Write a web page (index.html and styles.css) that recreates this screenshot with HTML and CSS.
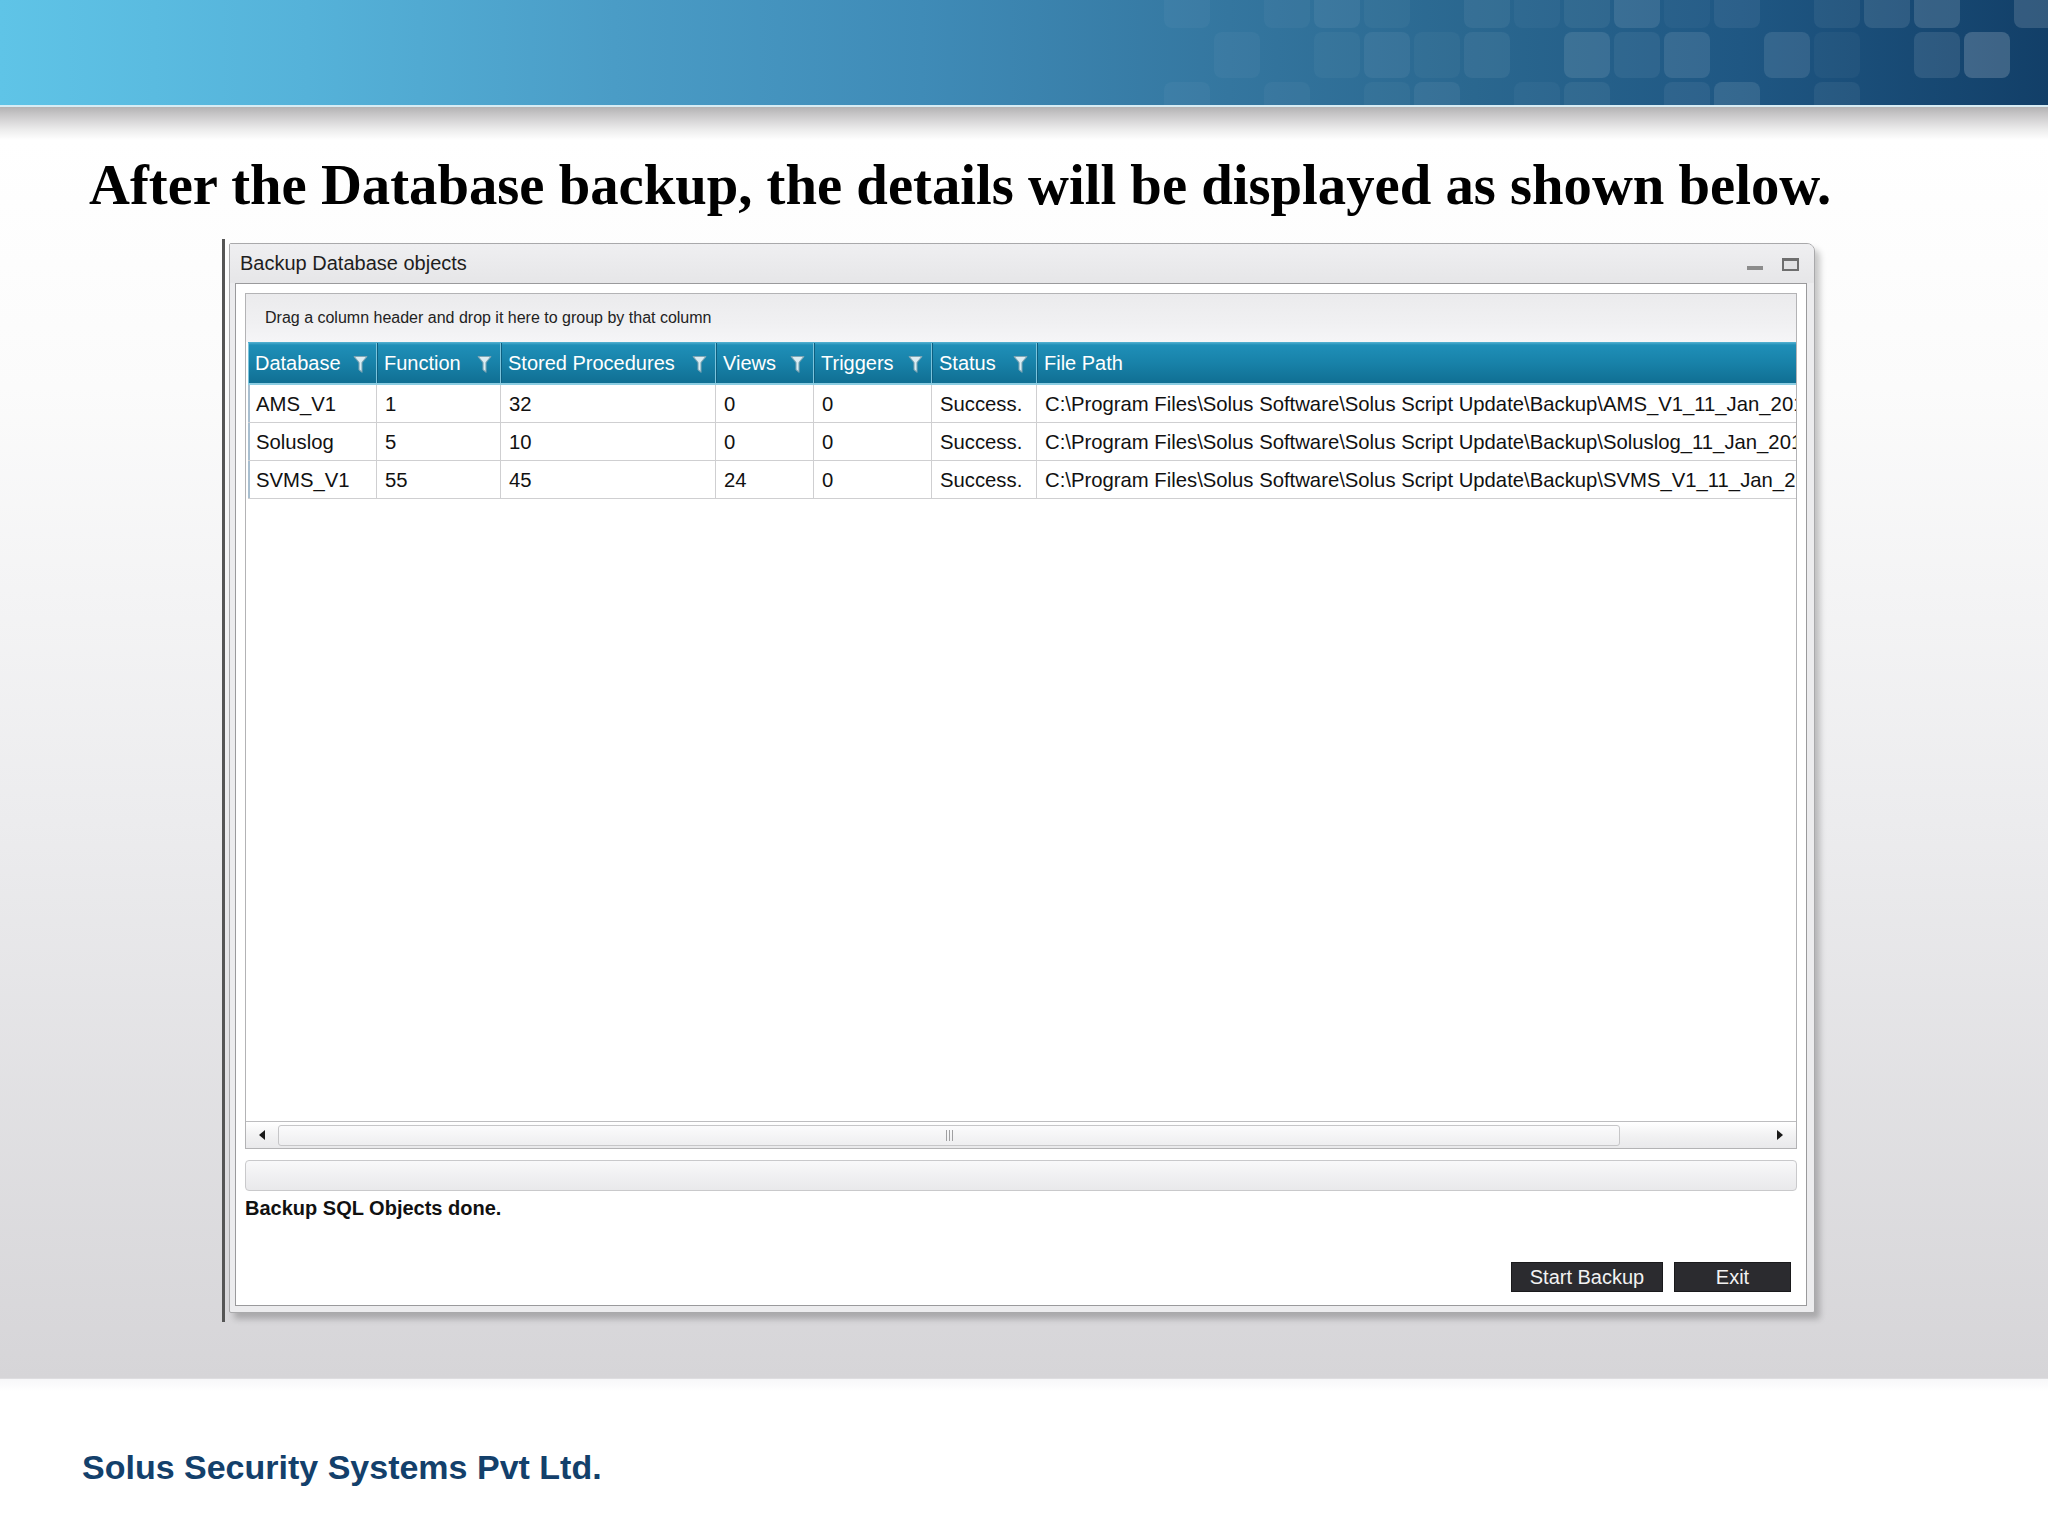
FILE: index.html
```html
<!DOCTYPE html>
<html lang="en">
<head>
<meta charset="utf-8">
<title>Backup Database objects</title>
<link rel="stylesheet" href="styles.css">
</head>
<body>
<div class="slide">
  <header class="banner">
    <div class="tiles">
      <i class="a1"></i><i class="a0"></i><i class="a1"></i><i class="a2"></i><i class="a1"></i><i class="a0"></i><i class="a2"></i><i class="a1"></i><i class="a2"></i><i class="a3"></i><i class="a1"></i><i class="a2"></i><i class="a0"></i><i class="a2"></i><i class="a3"></i><i class="a4"></i><i class="a0"></i><i class="a4"></i>
      <i class="a0"></i><i class="a1"></i><i class="a0"></i><i class="a1"></i><i class="a2"></i><i class="a1"></i><i class="a2"></i><i class="a0"></i><i class="a3"></i><i class="a2"></i><i class="a3"></i><i class="a0"></i><i class="a3"></i><i class="a1"></i><i class="a0"></i><i class="a3"></i><i class="a5"></i><i class="a0"></i>
      <i class="a1"></i><i class="a0"></i><i class="a1"></i><i class="a0"></i><i class="a1"></i><i class="a2"></i><i class="a0"></i><i class="a1"></i><i class="a2"></i><i class="a0"></i><i class="a2"></i><i class="a3"></i><i class="a0"></i><i class="a2"></i><i class="a0"></i><i class="a0"></i><i class="a0"></i><i class="a0"></i>
    </div>
  </header>
  <div class="banner-edge"></div>

  <main class="stage">
    <h1 class="headline">After the Database backup, the details will be displayed as shown below.</h1>

    <div class="shot">
      <div class="handle"></div>
      <section class="window">
        <div class="titlebar">
          <span class="wtitle">Backup Database objects</span>
          <span class="wbtns"><i class="wmin"></i><i class="wmax"></i></span>
        </div>
        <div class="panel">
          <div class="grid">
            <div class="grouping">Drag a column header and drop it here to group by that column</div>
            <div class="cols thead">
              <div class="th"><span>Database</span><svg class="funnel" viewBox="0 0 14 18"><path d="M1 1.5h12l-4.6 5.6v9.2l-2.8-2.4V7.1z"/></svg></div>
              <div class="th"><span>Function</span><svg class="funnel" viewBox="0 0 14 18"><path d="M1 1.5h12l-4.6 5.6v9.2l-2.8-2.4V7.1z"/></svg></div>
              <div class="th"><span>Stored Procedures</span><svg class="funnel" viewBox="0 0 14 18"><path d="M1 1.5h12l-4.6 5.6v9.2l-2.8-2.4V7.1z"/></svg></div>
              <div class="th"><span>Views</span><svg class="funnel" viewBox="0 0 14 18"><path d="M1 1.5h12l-4.6 5.6v9.2l-2.8-2.4V7.1z"/></svg></div>
              <div class="th"><span>Triggers</span><svg class="funnel" viewBox="0 0 14 18"><path d="M1 1.5h12l-4.6 5.6v9.2l-2.8-2.4V7.1z"/></svg></div>
              <div class="th"><span>Status</span><svg class="funnel" viewBox="0 0 14 18"><path d="M1 1.5h12l-4.6 5.6v9.2l-2.8-2.4V7.1z"/></svg></div>
              <div class="th last"><span>File Path</span></div>
            </div>
            <div class="cols trow">
              <div class="td first">AMS_V1</div><div class="td">1</div><div class="td">32</div><div class="td">0</div><div class="td">0</div><div class="td">Success.</div><div class="td last">C:\Program Files\Solus Software\Solus Script Update\Backup\AMS_V1_11_Jan_2013</div>
            </div>
            <div class="cols trow">
              <div class="td first">Soluslog</div><div class="td">5</div><div class="td">10</div><div class="td">0</div><div class="td">0</div><div class="td">Success.</div><div class="td last">C:\Program Files\Solus Software\Solus Script Update\Backup\Soluslog_11_Jan_2013</div>
            </div>
            <div class="cols trow">
              <div class="td first">SVMS_V1</div><div class="td">55</div><div class="td">45</div><div class="td">24</div><div class="td">0</div><div class="td">Success.</div><div class="td last">C:\Program Files\Solus Software\Solus Script Update\Backup\SVMS_V1_11_Jan_2013</div>
            </div>
            <div class="empty"></div>
            <div class="hscroll">
              <div class="sbtn"><i class="arrow-left"></i></div>
              <div class="thumb"><i class="grip"></i></div>
              <div class="track"></div>
              <div class="sbtn"><i class="arrow-right"></i></div>
            </div>
          </div>
          <div class="progress"></div>
          <div class="status">Backup SQL Objects done.</div>
          <div class="actions">
            <button class="btn btn-start">Start Backup</button>
            <button class="btn btn-exit">Exit</button>
          </div>
        </div>
      </section>
    </div>
  </main>

  <footer class="footer">Solus Security Systems Pvt Ltd.</footer>
</div>
</body>
</html>
```

FILE: styles.css
```css
* { box-sizing: border-box; }

html, body {
  margin: 0;
  padding: 0;
  background: #ffffff;
}

.slide {
  width: 2048px;
  height: 1536px;
  display: flex;
  flex-direction: column;
  overflow: hidden;
  font-family: "Liberation Sans", Arial, sans-serif;
}

/* ---------- banner ---------- */
.banner {
  height: 105px;
  flex: none;
  overflow: hidden;
  display: flex;
  justify-content: flex-end;
  background: linear-gradient(90deg, #5fc4e7 0%, #55b2d9 15%, #4a9cc6 30%, #3f8bb7 45%, #34769f 60%, #2a678f 72%, #1f5783 85%, #123f68 100%);
}

.tiles {
  display: grid;
  grid-template-columns: repeat(18, 46px);
  grid-auto-rows: 46px;
  gap: 4px;
  margin-top: -18px;
  margin-right: -12px;
}

.tiles i {
  display: block;
  border-radius: 8px;
  background: rgba(255, 255, 255, 0.04);
}
.tiles i.a0 { background: rgba(255, 255, 255, 0.0); }
.tiles i.a1 { background: rgba(255, 255, 255, 0.035); }
.tiles i.a2 { background: rgba(255, 255, 255, 0.06); }
.tiles i.a3 { background: rgba(255, 255, 255, 0.10); }
.tiles i.a4 { background: rgba(255, 255, 255, 0.14); }
.tiles i.a5 { background: rgba(255, 255, 255, 0.18); }

.banner-edge {
  height: 35px;
  flex: none;
  background:
    linear-gradient(#d7ecf4, #d7ecf4) top / 100% 2px no-repeat,
    linear-gradient(180deg, #b3b2b3 2px, #c9c8c9 10px, #ebebeb 24px, #ffffff 35px);
}

/* ---------- stage ---------- */
.stage {
  height: 1238px;
  flex: none;
  background: linear-gradient(180deg, #ffffff 0%, #fbfbfb 20%, #ececee 55%, #d6d5d8 100%);
  display: flex;
  flex-direction: column;
}

.headline {
  margin: 14px 0 0 89px;
  font-family: "Liberation Serif", "Times New Roman", serif;
  font-weight: bold;
  font-size: 56.7px;
  line-height: 62px;
  color: #000;
  white-space: nowrap;
}

.shot {
  margin: 23px 0 0 222px;
  height: 1083px;
  display: flex;
  align-items: flex-start;
}

.handle {
  width: 3px;
  height: 1083px;
  background: #555555;
  flex: none;
}

/* ---------- window ---------- */
.window {
  margin: 4px 0 0 4px;
  width: 1586px;
  height: 1070px;
  background: #ececee;
  border: 1px solid #a9a9ab;
  border-radius: 2px 8px 2px 2px;
  box-shadow: 5px 6px 6px rgba(0, 0, 0, 0.22);
  display: flex;
  flex-direction: column;
}

.titlebar {
  height: 39px;
  flex: none;
  display: flex;
  align-items: center;
  justify-content: space-between;
  padding: 0 15px 0 10px;
  background: linear-gradient(180deg, #efeff1, #e6e6e8);
  border-radius: 0 7px 0 0;
}

.wtitle {
  font-size: 20px;
  color: #1e1e1e;
}

.wbtns {
  display: flex;
  align-items: flex-end;
  gap: 19px;
  margin-top: 2px;
}

.wmin {
  display: block;
  width: 16px;
  height: 4px;
  background: #8c8c8c;
  margin-bottom: 1px;
}

.wmax {
  display: block;
  width: 17px;
  height: 13px;
  border: 2px solid #6e6e6e;
  border-top-width: 3px;
  background: #e2e2e4;
}

.panel {
  flex: 1;
  margin: 0 7px 6px 5px;
  background: #ffffff;
  border: 1px solid #9a9a9c;
  padding: 9px 9px 13px 9px;
  display: flex;
  flex-direction: column;
}

/* ---------- grid ---------- */
.grid {
  height: 856px;
  flex: none;
  border: 1px solid #b3b3b5;
  display: flex;
  flex-direction: column;
  overflow: hidden;
}

.grouping {
  height: 48px;
  flex: none;
  padding-left: 19px;
  display: flex;
  align-items: center;
  font-size: 16px;
  color: #222;
  background: linear-gradient(180deg, #ebebed 0%, #f0f0f2 60%, #f5f5f7 100%);
}

.cols {
  display: grid;
  grid-template-columns: 129px 124px 215px 98px 118px 105px 759px;
  margin-left: 2px;
  flex: none;
}

.thead {
  height: 43px;
  padding-top: 1px;
  background: linear-gradient(180deg, #56b3d3 0px, #1f8fb8 3px, #1882a9 50%, #106f93 100%);
  border-bottom: 2px solid #8ccde2;
}

.th {
  display: flex;
  align-items: center;
  justify-content: space-between;
  padding: 0 8px 0 6px;
  color: #ffffff;
  font-size: 20px;
  border-right: 1px solid #7cc4dc;
  border-left: 1px solid #0d5f80;
  white-space: nowrap;
  overflow: hidden;
}
.th:first-child { border-left: 1px solid #7cc4dc; }
.th.last { border-right: none; }

.funnel {
  width: 15px;
  height: 19px;
  flex: none;
  margin-top: 2px;
}
.funnel path {
  fill: #dcedf3;
  stroke: #7fa6b5;
  stroke-width: 1;
  stroke-linejoin: round;
}

.trow {
  height: 38px;
  border-bottom: 1px solid #cfcfd1;
}

.td {
  display: flex;
  align-items: center;
  padding-left: 8px;
  padding-top: 1px;
  font-size: 20.3px;
  color: #111;
  border-right: 1px solid #cfcfd1;
  white-space: nowrap;
  overflow: hidden;
}
.td.first {
  padding-left: 6px;
  border-left: 2px solid #a9bfd0;
}
.td.last { border-right: none; }

.empty {
  flex: 1;
  background: #ffffff;
}

.hscroll {
  height: 27px;
  flex: none;
  display: flex;
  align-items: center;
  border-top: 1px solid #bdbdbf;
  background: linear-gradient(180deg, #ffffff 0%, #f2f2f3 50%, #e9e9eb 100%);
}

.sbtn {
  width: 32px;
  height: 100%;
  flex: none;
  display: flex;
  align-items: center;
  justify-content: center;
}

.arrow-left {
  width: 0;
  height: 0;
  border-top: 5px solid transparent;
  border-bottom: 5px solid transparent;
  border-right: 6px solid #1a1a1a;
}

.arrow-right {
  width: 0;
  height: 0;
  border-top: 5px solid transparent;
  border-bottom: 5px solid transparent;
  border-left: 6px solid #1a1a1a;
}

.thumb {
  width: 1342px;
  height: 21px;
  flex: none;
  border: 1px solid #c6c6c8;
  border-radius: 3px;
  background: linear-gradient(180deg, #fbfbfc, #eeeef0);
  display: flex;
  align-items: center;
  justify-content: center;
}

.grip {
  display: block;
  width: 7px;
  height: 11px;
  border-left: 1px solid #a0a0a2;
  border-right: 1px solid #a0a0a2;
  background: linear-gradient(90deg, transparent 2px, #a0a0a2 2px, #a0a0a2 3px, transparent 3px);
}

.track {
  flex: 1;
  height: 100%;
}

/* ---------- lower panel ---------- */
.progress {
  margin-top: 11px;
  height: 31px;
  flex: none;
  border: 1px solid #c9c9cb;
  border-radius: 4px;
  background: linear-gradient(180deg, #f9f9fa 0%, #efeff1 55%, #e9e9eb 100%);
}

.status {
  margin-top: 6px;
  font-size: 20px;
  line-height: 23px;
  font-weight: bold;
  color: #111;
}

.actions {
  margin-top: auto;
  display: flex;
  justify-content: flex-end;
  gap: 11px;
  padding-right: 6px;
}

.btn {
  height: 30px;
  margin: 0;
  padding: 0;
  border: 1px solid #1a1a1c;
  background: #2b2b2f;
  color: #f2f2f2;
  font-family: "Liberation Sans", Arial, sans-serif;
  font-size: 20px;
  line-height: 28px;
  cursor: pointer;
}
.btn-start { width: 152px; }
.btn-exit { width: 117px; }

/* ---------- footer ---------- */
.footer {
  flex: 1;
  padding: 68px 0 0 82px;
  background: linear-gradient(180deg, #f7f7f9 0px, #ffffff 12px);
  border-top: 1px solid #dedde0;
  font-size: 34px;
  line-height: 40px;
  font-weight: bold;
  color: #13406b;
}
```
